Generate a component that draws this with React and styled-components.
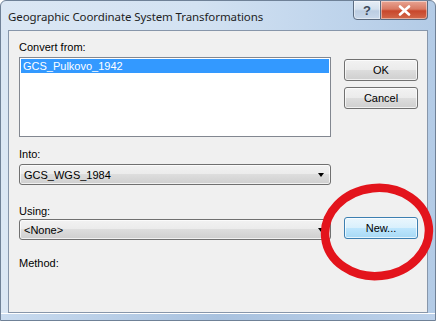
import React from "react";
import styled, { createGlobalStyle } from "styled-components";

const GlobalStyle = createGlobalStyle`
  html, body {
    margin: 0;
    padding: 0;
    background: #ffffff;
  }
  body {
    font-family: "Liberation Sans", Arial, sans-serif;
  }
`;

function App() {
  return (
    <>
      <GlobalStyle />
      <Window>
        <TitleBar>
          <Title>Geographic Coordinate System Transformations</Title>
          <CaptionButtons>
            <CaptionButton>?</CaptionButton>
            <CaptionButton close>
              <svg width="13" height="11" viewBox="0 0 13 11">
                <path
                  d="M2 1.5 L11 9.5 M11 1.5 L2 9.5"
                  stroke="#ffffff"
                  strokeWidth="2.6"
                  strokeLinecap="round"
                />
              </svg>
            </CaptionButton>
          </CaptionButtons>
        </TitleBar>
        <Client>
          <Label>Convert from:</Label>
          <Row>
            <ListBox>
              <ListItem>GCS_Pulkovo_1942</ListItem>
            </ListBox>
            <ButtonStack>
              <Button>OK</Button>
              <Button>Cancel</Button>
            </ButtonStack>
          </Row>
          <Label top={11}>Into:</Label>
          <Row>
            <Combo>
              <span>GCS_WGS_1984</span>
              <Arrow />
            </Combo>
          </Row>
          <Label top={20} bottom={1}>Using:</Label>
          <Row>
            <Combo>
              <span>&lt;None&gt;</span>
              <Arrow />
            </Combo>
            <Button hot shift>New...</Button>
          </Row>
          <Label top={17}>Method:</Label>
        </Client>
        <BottomFrame />
        <Circle width="118" height="102" viewBox="0 0 118 102">
          <ellipse
            cx="58"
            cy="50"
            rx="52"
            ry="44"
            fill="none"
            stroke="#e3141c"
            strokeWidth="8.5"
            transform="rotate(-6 58 50)"
          />
        </Circle>
      </Window>
    </>
  );
}

const Window = styled.div`
  position: relative;
  width: 436px;
  height: 321px;
  box-sizing: border-box;
  border: 1px solid #6f8197;
  border-radius: 6px 6px 0 0;
  background: linear-gradient(to right, #dbe7f4 0%, #d3e2f2 45%, #c0d5ec 75%, #b3cbe6 100%);
  overflow: hidden;
  display: flex;
  flex-direction: column;
`;

const TitleBar = styled.div`
  height: 29px;
  display: flex;
  justify-content: space-between;
  align-items: flex-start;
  padding: 0 7px 0 7px;
`;

const Title = styled.div`
  font-family: "Noto Sans", "Open Sans", sans-serif;
  font-size: 11.5px;
  color: #1e1e1e;
  margin-top: 8px;
  letter-spacing: -0.1px;
`;

const CaptionButtons = styled.div`
  display: flex;
  margin-top: -1px;
`;

const CaptionButton = styled.div`
  width: ${(p) => (p.close ? "47px" : "28px")};
  height: 20px;
  box-sizing: border-box;
  display: flex;
  align-items: center;
  justify-content: center;
  border: 1px solid #5b6b80;
  border-left-width: ${(p) => (p.close ? "0" : "1px")};
  border-radius: ${(p) => (p.close ? "0 0 4px 0" : "0 0 0 4px")};
  font-family: "Liberation Sans", sans-serif;
  font-weight: bold;
  font-size: 13px;
  color: #3f4a5a;
  background: ${(p) =>
    p.close
      ? "linear-gradient(to bottom, #e8a493 0%, #d97a63 45%, #c8472c 55%, #d2684a 100%)"
      : "linear-gradient(to bottom, #e6edf6 0%, #d4e0ee 45%, #bccde2 55%, #c9d8ea 100%)"};
  box-shadow: inset 0 0 0 1px rgba(255, 255, 255, 0.45);
`;

const Client = styled.div`
  margin: 0 7px;
  height: 283px;
  box-sizing: border-box;
  border: 1px solid #8796aa;
  background: #f0f0f0;
  padding: 10px 9px 0 10px;
  display: flex;
  flex-direction: column;
`;

const Label = styled.div`
  font-size: 11px;
  line-height: 13px;
  color: #000000;
  margin-top: ${(p) => p.top || 0}px;
  margin-bottom: ${(p) => (p.bottom !== undefined ? p.bottom : 3)}px;
`;

const Row = styled.div`
  display: grid;
  grid-template-columns: 312px 74px;
  column-gap: 13px;
  align-items: start;
`;

const ListBox = styled.div`
  height: 80px;
  box-sizing: border-box;
  border: 1px solid #828790;
  background: #ffffff;
  padding: 1px;
`;

const ListItem = styled.div`
  height: 14px;
  background: #3399ff;
  color: #ffffff;
  font-size: 11px;
  line-height: 14px;
  padding-left: 2px;
`;

const ButtonStack = styled.div`
  display: flex;
  flex-direction: column;
  gap: 6px;
  margin-top: 2px;
`;

const Button = styled.div`
  height: 22px;
  box-sizing: border-box;
  border: 1px solid ${(p) => (p.hot ? "#3c7fb1" : "#707070")};
  border-radius: 3px;
  display: flex;
  align-items: center;
  justify-content: center;
  font-size: 11px;
  color: #000000;
  margin-top: ${(p) => (p.shift ? "-2px" : "0")};
  background: ${(p) =>
    p.hot
      ? "linear-gradient(to bottom, #eaf6fd 0%, #d9f0fc 49%, #bee6fd 50%, #a7d9f5 100%)"
      : "linear-gradient(to bottom, #f2f2f2 0%, #ebebeb 49%, #dddddd 50%, #cfcfcf 100%)"};
  box-shadow: inset 0 0 0 1px rgba(255, 255, 255, 0.7);
`;

const Combo = styled.div`
  height: 21px;
  box-sizing: border-box;
  border: 1px solid #707070;
  border-radius: 3px;
  display: flex;
  align-items: center;
  justify-content: space-between;
  padding: 0 6px 0 4px;
  font-size: 11px;
  color: #000000;
  background: linear-gradient(to bottom, #f2f2f2 0%, #ebebeb 49%, #dddddd 50%, #cfcfcf 100%);
  box-shadow: inset 0 0 0 1px rgba(255, 255, 255, 0.7);
`;

const Arrow = styled.span`
  width: 0;
  height: 0;
  border-left: 3.5px solid transparent;
  border-right: 3.5px solid transparent;
  border-top: 4px solid #000000;
  margin-top: 1px;
`;

const BottomFrame = styled.div`
  flex: 1;
  border-top: 1px solid #ffffff;
  background: linear-gradient(to right, #c9dbef 0%, #a9c2df 50%, #bcd1ea 100%);
`;

const Circle = styled.svg`
  position: absolute;
  left: 318px;
  top: 181px;
`;

export default App;
